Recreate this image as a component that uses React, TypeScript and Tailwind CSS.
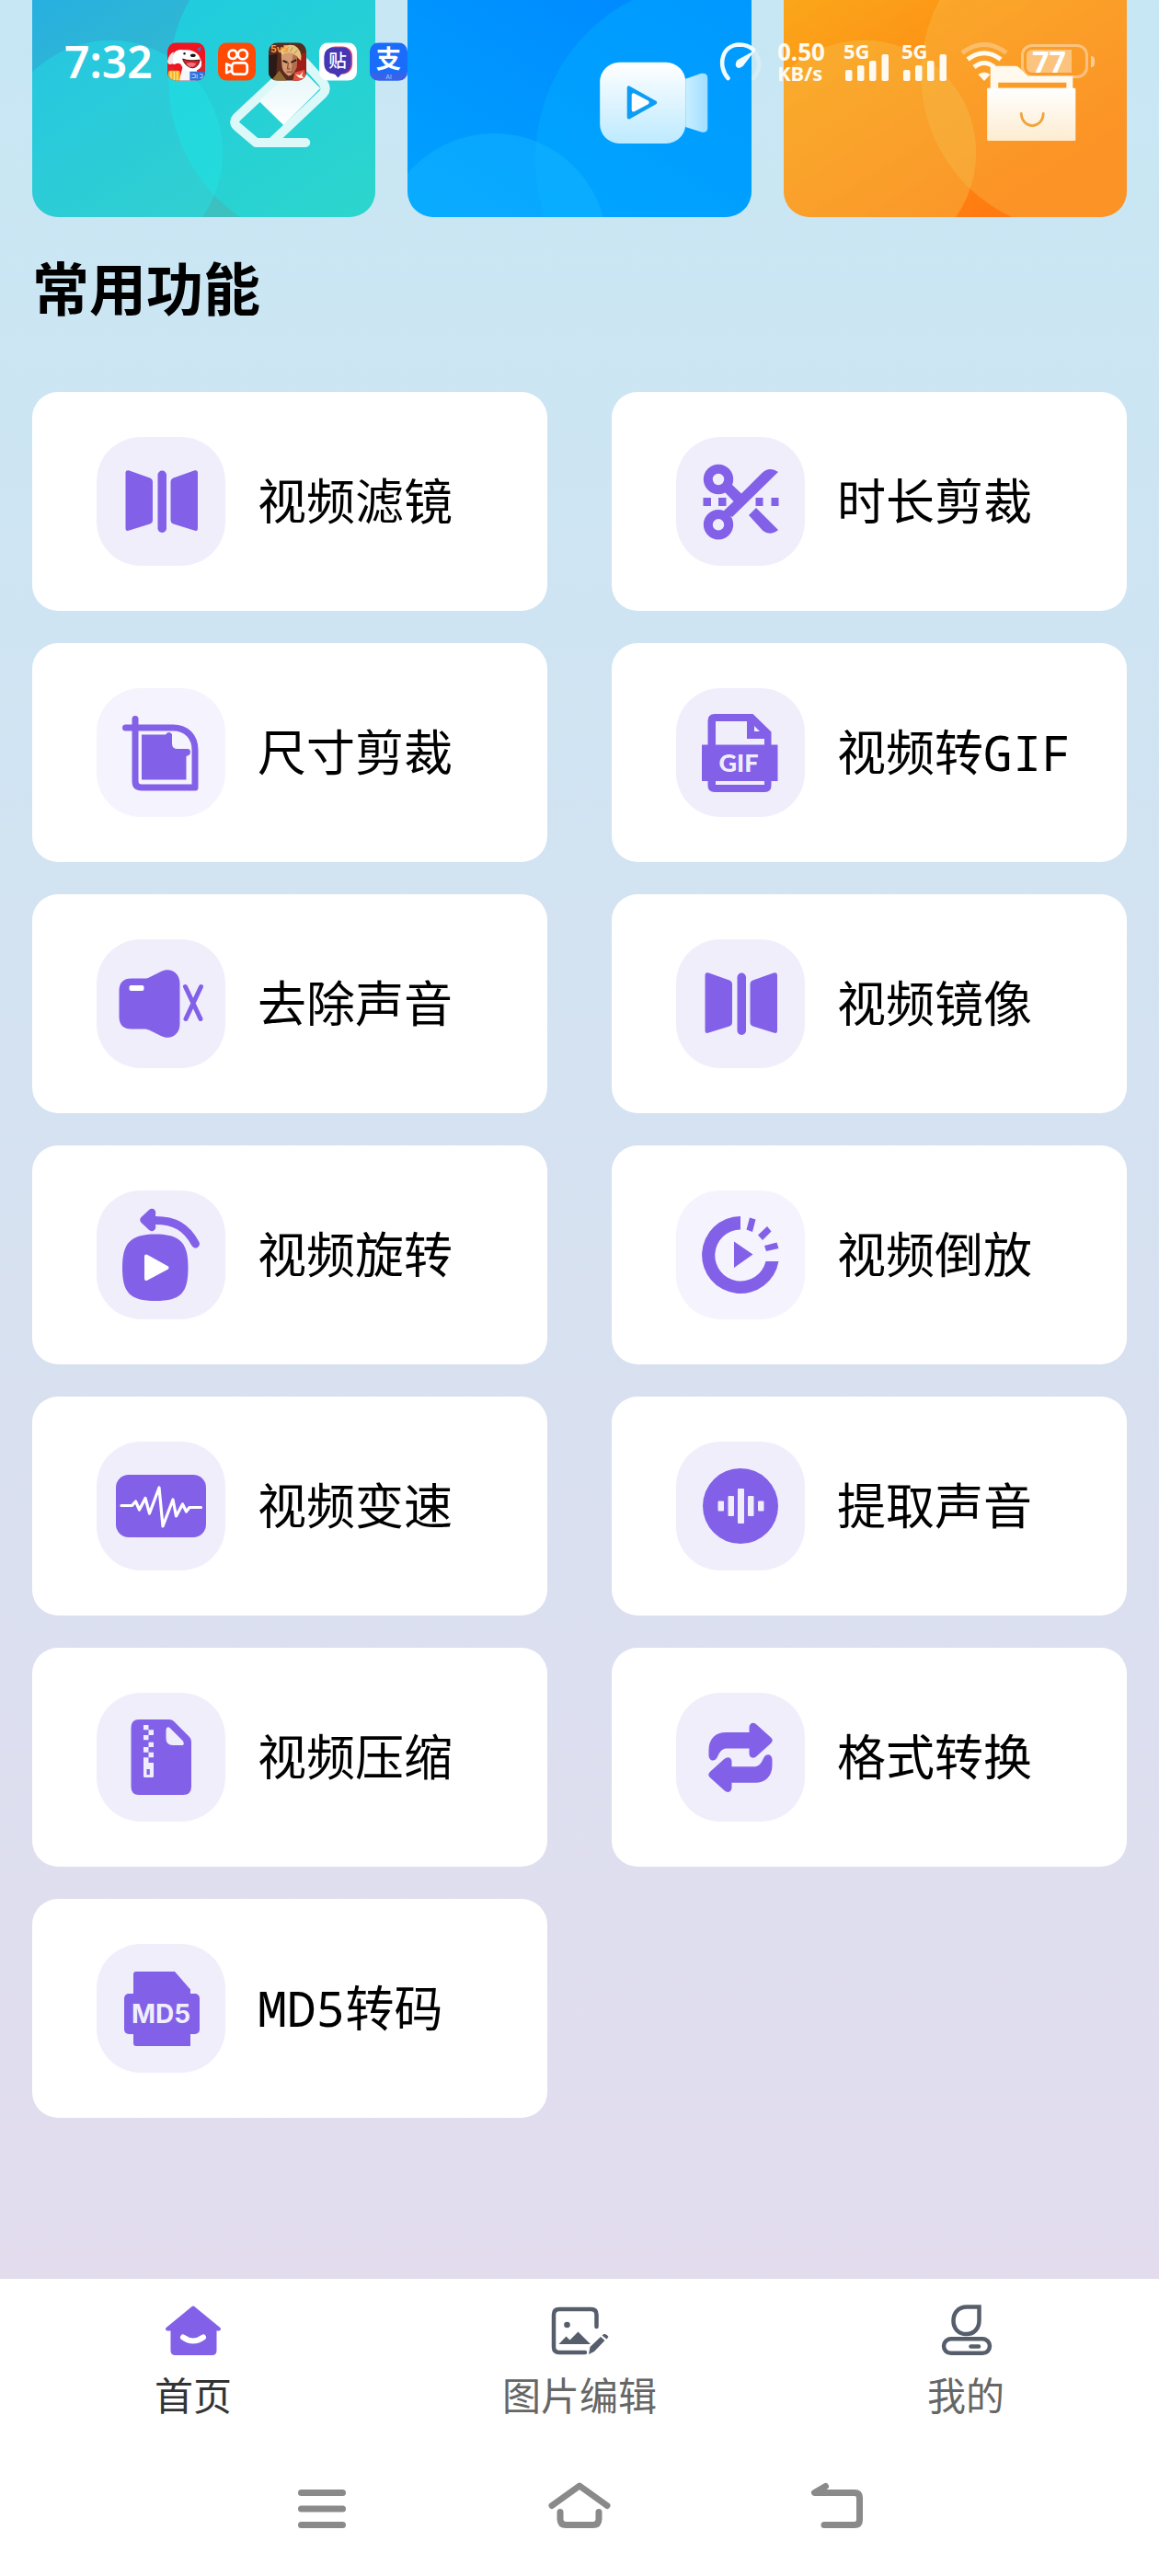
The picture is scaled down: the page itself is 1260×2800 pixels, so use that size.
import React from 'react';

const PURPLE = '#8261e8';
const TILE = '#f1eefc';

/* ---------- Feature icons, drawn on a 140 x 140 tile ---------- */

const MirrorIcon = () => (
  <g fill={PURPLE}>
    <path d="M31.5 39.5Q31.5 35.5 35.5 36.5L58 44.5Q61 45.5 61 49V90Q61 93.5 58 94.5L35.5 101.5Q31.5 103 31.5 99Z" />
    <rect x="66.5" y="36.5" width="9.5" height="67.5" rx="4.7" />
    <path d="M110 39.5Q110 35.5 106 36.5L83.5 44.5Q80.5 45.5 80.5 49V90Q80.5 93.5 83.5 94.5L106 101.5Q110 103 110 99Z" />
  </g>
);

const ScissorsIcon = () => (
  <g fill={PURPLE}>
    <circle cx="46" cy="46" r="11.2" fill="none" stroke={PURPLE} strokeWidth="10" />
    <circle cx="46" cy="95.3" r="11.2" fill="none" stroke={PURPLE} strokeWidth="10" />
    <path d="M60 51L71 61.5L93 39.5Q101.5 31.5 111 38L61 87L51 81L62.5 70L52 59Z" />
    <path d="M87 77L111 101Q102.5 108 94.5 102L79 85Z" />
    <path d="M29.5 66h8.5v9h-8.5zM46 66h8.5v9H46zM86.5 66h8v9h-8zM103.5 66h8v9h-8z" />
  </g>
);

const CropIcon = () => (
  <g>
    <path
      d="M31.5 43H83C98 43 107 53 107 67V108H49Q42 108 42 101V33.5"
      fill="none"
      stroke={PURPLE}
      strokeWidth="7"
      strokeLinecap="round"
      strokeLinejoin="round"
    />
    <path
      d="M49 50.5H75Q78.5 46 82 50V60Q82 66 88 66H99Q102 66 102 69.5Q102 73 97.5 74V99.5H49Z"
      fill={PURPLE}
    />
  </g>
);

const GifIcon = () => (
  <g>
    <path
      fill={PURPLE}
      fillRule="evenodd"
      d="M42 28H83.5L103.5 47.5V61.5H110.5V101H103.5V106Q103.5 113 96.5 113H42Q34.5 113 34.5 106V101H28V61.5H34.5V35.5Q34.5 28 42 28ZM43 36V61.5H96V55H77V36ZM85 41V47H91ZM43 101V105H96V101Z"
    />
    <text x="68" y="91" textAnchor="middle" fontSize="27" fill={TILE} className="font-['Lato','Noto_Sans',sans-serif] font-black">
      GIF
    </text>
  </g>
);

const MuteIcon = () => (
  <g>
    <path
      fill={PURPLE}
      d="M38 42.5H53Q55 42.5 58 41L70 35C80 30 90.5 36 90.5 48V92C90.5 104 80 110 70 105L58 99Q55 97.5 53 97.5H38Q24.5 97.5 24.5 84V56Q24.5 42.5 38 42.5Z"
    />
    <rect x="35.5" y="50" width="16" height="6" rx="2" fill="#fff" />
    <path d="M96.5 51.5L113 86.5M113.5 51.5L97 86.5" stroke={PURPLE} strokeWidth="5" strokeLinecap="round" />
  </g>
);

const RotateIcon = () => (
  <g>
    <path fill={PURPLE} d="M64 47.5C92 47.5 99.5 58 99.5 84C99.5 111 92 120 64 120C36 120 28 111 28 84C28 58 36 47.5 64 47.5Z" />
    <path d="M54 71.5V96L76.5 84Z" fill="#fff" stroke="#fff" strokeWidth="4" strokeLinejoin="round" />
    <path d="M62 32.5C85 32 98 40 107.5 58" fill="none" stroke={PURPLE} strokeWidth="9" strokeLinecap="round" />
    <path d="M51.5 32L60 24L59.5 31.5L60 40Z" fill={PURPLE} stroke={PURPLE} strokeWidth="8.5" strokeLinejoin="round" />
  </g>
);

const ReverseIcon = () => (
  <g fill={PURPLE}>
    <path d="M70 28A42 42 0 1 0 111.5 77H97.5A28 28 0 1 1 70 42.5Z" />
    <path d="M80 29.5L86.5 31.5L83 45L76.5 42.5ZM99 39L103.5 44.5L94 54L89 48.5ZM109.5 56.5L111.5 63L98 66L96 60ZM63 55.5V84L83.5 69.5Z" />
  </g>
);

const SpeedIcon = () => (
  <g>
    <rect x="21" y="36" width="98" height="68" rx="14" fill={PURPLE} />
    <path
      d="M27 69.5H38.5L42.5 65L46.5 74L53 61.5L57.5 78L68 50L72 92L83 63L86.5 81L93.5 68L97.5 76L101 71.5H113.5"
      fill="none"
      stroke="#fff"
      strokeWidth="3.2"
      strokeLinecap="round"
      strokeLinejoin="round"
    />
  </g>
);

const ExtractIcon = () => (
  <g>
    <circle cx="70" cy="70" r="41" fill={PURPLE} />
    <g fill={TILE}>
      <rect x="45.5" y="64.5" width="6.5" height="11" rx="1" />
      <rect x="56.5" y="59" width="6.5" height="22" rx="1" />
      <rect x="67" y="51" width="7" height="38" rx="1" />
      <rect x="78" y="59" width="6.5" height="22" rx="1" />
      <rect x="89" y="64.5" width="6.5" height="11" rx="1" />
    </g>
  </g>
);

const ZipIcon = () => (
  <g>
    <path fill={PURPLE} d="M46 29H79Q82 29 84 31L101 48Q103 50 103 53V102Q103 111 94 111H46Q37.5 111 37.5 102V38Q37.5 29 46 29Z" />
    <g fill={TILE}>
      <path d="M75.5 40Q76.5 35.5 80 38.5L94 52.5Q96 56.8 93 57H83Q75.5 57 75.5 49Z" />
      <path d="M51 35h5.5v5.3H51zM56.5 40.3H62V46h-5.5zM51 46h5.5v5.3H51zM56.5 53.7H62V59h-5.5zM51 59h5.5v5.7H51zM56.5 64.7H62v5.6h-5.5z" />
      <path fillRule="evenodd" d="M51 70.3H56.5V76H62V90.5Q62 92 60.5 92H52.5Q51 92 51 90.5ZM54.5 83V89H57.8V83Z" />
    </g>
  </g>
);

const ARROW =
  'M35.5 68V62C35.5 50 43 43 54 43H79.5V38C79.5 33 84 31 88 35L103 48.5Q106.5 51.7 103 55L88 68.5C84 72.5 79.5 70.5 79.5 66V60.5H56C50 60.5 48 63 44.5 70.5C42 75.5 35.5 74 35.5 68Z';

const ConvertIcon = () => (
  <g fill={PURPLE}>
    <path d={ARROW} />
    <path d={ARROW} transform="rotate(180 70 70.4)" />
  </g>
);

const Md5Icon = () => (
  <g>
    <path fill={PURPLE} d="M43 30H85L102 49.5V111H43Q40 111 40 108V33Q40 30 43 30Z" />
    <rect x="30" y="54" width="82" height="44" rx="5" fill={PURPLE} />
    <text x="70" y="85.5" textAnchor="middle" fontSize="28" fill={TILE} className="font-['Inter',sans-serif] font-bold">
      MD5
    </text>
  </g>
);

const features = [
  { label: '视频滤镜', icon: <MirrorIcon />, tile: 'bg-[#f1eefc]' },
  { label: '时长剪裁', icon: <ScissorsIcon />, tile: 'bg-[#f1eefc]' },
  { label: '尺寸剪裁', icon: <CropIcon />, tile: 'bg-[#f5f3fd]' },
  { label: '视频转GIF', icon: <GifIcon />, tile: 'bg-[#f1eefc]' },
  { label: '去除声音', icon: <MuteIcon />, tile: 'bg-[#f1eefc]' },
  { label: '视频镜像', icon: <MirrorIcon />, tile: 'bg-[#f1eefc]' },
  { label: '视频旋转', icon: <RotateIcon />, tile: 'bg-[#f1eefc]' },
  { label: '视频倒放', icon: <ReverseIcon />, tile: 'bg-[#f5f3fd]' },
  { label: '视频变速', icon: <SpeedIcon />, tile: 'bg-[#f1eefc]' },
  { label: '提取声音', icon: <ExtractIcon />, tile: 'bg-[#f1eefc]' },
  { label: '视频压缩', icon: <ZipIcon />, tile: 'bg-[#f1eefc]' },
  { label: '格式转换', icon: <ConvertIcon />, tile: 'bg-[#f1eefc]' },
  { label: 'MD5转码', icon: <Md5Icon />, tile: 'bg-[#f1eefc]' },
];

/* ---------- Banner artwork ---------- */

const EraserArt = () => (
  <>
    <defs>
      <linearGradient id="teal" x1="0" y1="0" x2="1" y2="1">
        <stop offset="0" stopColor="#27b0e0" />
        <stop offset="1" stopColor="#43c6b6" />
      </linearGradient>
      <linearGradient id="eraser" x1="0" y1="0" x2="0" y2="1">
        <stop offset="0" stopColor="#e2f6f9" />
        <stop offset="1" stopColor="#ffffff" />
      </linearGradient>
    </defs>
    <rect width="374" height="236" fill="url(#teal)" />
    <circle cx="328" cy="88" r="180" fill="#12e8e6" fillOpacity="0.45" />
    <circle cx="85" cy="166" r="122" fill="#22e4e8" fillOpacity="0.42" />
    <path
      d="M297 155H243L223 138Q217.5 133 222 128L285 69Q291 63 297 69L315 89Q321 96 316 102L262 153"
      fill="none"
      stroke="#dcf8f9"
      strokeWidth="10"
      strokeLinecap="round"
      strokeLinejoin="round"
    />
    <path d="M246.5 110L288 71L313 96L273 136Z" fill="url(#eraser)" />
  </>
);

const VideoArt = () => (
  <>
    <defs>
      <linearGradient id="blue" x1="1" y1="0" x2="0" y2="1">
        <stop offset="0" stopColor="#0086ff" />
        <stop offset="1" stopColor="#00a2ff" />
      </linearGradient>
      <linearGradient id="camera" x1="0" y1="0" x2="0" y2="1">
        <stop offset="0" stopColor="#ffffff" />
        <stop offset="1" stopColor="#bdeaff" />
      </linearGradient>
      <linearGradient id="lens" x1="0" y1="0" x2="1" y2="0">
        <stop offset="0" stopColor="#c8eeff" />
        <stop offset="1" stopColor="#a0deff" />
      </linearGradient>
    </defs>
    <rect width="374" height="236" fill="url(#blue)" />
    <circle cx="332" cy="172" r="193" fill="#00b0ff" fillOpacity="0.45" />
    <circle cx="94" cy="268" r="123" fill="#14b8ff" fillOpacity="0.45" />
    <path d="M302 86L319 80Q326 79 326 85V139Q326 145 319 143.5L302 138Z" fill="url(#lens)" />
    <rect x="209" y="68" width="93" height="88" rx="21" fill="url(#camera)" />
    <path d="M240.5 95.5V127.5L269 111.5Z" fill="#0d9df5" stroke="#0d9df5" strokeWidth="4" strokeLinejoin="round" />
    <path d="M245.5 103.5V119.5L260.5 111.5Z" fill="#fff" stroke="#fff" strokeWidth="4" strokeLinejoin="round" />
  </>
);

const FolderArt = () => (
  <>
    <defs>
      <linearGradient id="orange" x1="0" y1="0" x2="1" y2="1">
        <stop offset="0" stopColor="#fba61a" />
        <stop offset="0.8" stopColor="#ff7a10" />
      </linearGradient>
      <linearGradient id="folder" x1="0" y1="0" x2="0" y2="1">
        <stop offset="0" stopColor="#ffffff" />
        <stop offset="1" stopColor="#fdecd0" />
      </linearGradient>
    </defs>
    <rect width="374" height="236" fill="url(#orange)" />
    <circle cx="320" cy="81" r="171" fill="#f6c04e" fillOpacity="0.36" />
    <circle cx="87" cy="166" r="122" fill="#f6c04e" fillOpacity="0.4" />
    <path fillRule="evenodd" d="M227 72H252Q254 72 256 74L265 83H314V97H224.5V75Q224.5 72 227 72ZM233 90V96H307V90Z" fill="#fff9ee" />
    <rect x="221" y="96" width="96" height="57" rx="1" fill="url(#folder)" />
    <path d="M258 123.5C259 141 281 141 282 123.5" fill="none" stroke="#f2a33c" strokeWidth="2.8" strokeLinecap="round" />
  </>
);

const banners = [
  { name: 'eraser', art: <EraserArt /> },
  { name: 'video', art: <VideoArt /> },
  { name: 'folder', art: <FolderArt /> },
];

/* ---------- Status bar ---------- */

const appIcons = [
  // white puppy on red
  <g key="dog">
    <rect width="42" height="42" fill="#ee1420" />
    <path d="M0 26L8 28L6 42H0ZM42 22L35 28L36 42H42Z" fill="#d9242f" />
    <path d="M17 27L33 30L32 42H13Z" fill="#f4f6fa" />
    <path d="M6 14Q9 6 18 8Q29 7 35 14L38 21Q39 29 32 31Q20 34 16 26Q14 21 8 24Q3 24 4 18Z" fill="#fff" />
    <path d="M7 10Q1 13 0 21Q1 26 6 23Z" fill="#f3e6e8" />
    <path d="M17 18Q25 21 36 19Q35 27 28 28Q20 27 17 18Z" fill="#d51f28" stroke="#4a1216" strokeWidth="1" />
    <path d="M21 23Q26 21 32 23Q30 27 27 27Q23 27 21 23Z" fill="#f2707a" />
    <ellipse cx="28.5" cy="14" rx="3" ry="1.8" fill="#161616" />
    <circle cx="19" cy="12" r="1.2" fill="#161616" />
    <path d="M33 7L38 4L36 10Z" fill="#3b78d8" />
    <rect x="1" y="31" width="13" height="11" rx="2" fill="#f6b51e" />
    <path d="M4 32V42M7.5 32V42M11 32V42" stroke="#fff0b0" strokeWidth="1" />
    <rect x="25" y="32" width="17" height="10" fill="#2b72dc" />
    <path d="M27 35H31V39H27M33 35V40M36 35H39V39H36" stroke="#bcd6fb" strokeWidth="1" fill="none" />
  </g>,
  // camera with two reels
  <g key="camera">
    <rect width="42" height="42" fill="#ff4a06" />
    <g fill="none" stroke="#fff" strokeWidth="2.8">
      <circle cx="16.5" cy="13" r="4.7" />
      <circle cx="27.5" cy="13" r="5.2" />
      <rect x="15.5" y="22.5" width="17" height="12.5" rx="3.5" />
      <path d="M15.5 26L9.5 23.5V33.5L15.5 31" strokeLinejoin="round" />
    </g>
  </g>,
  // game hero portrait
  <g key="hero">
    <rect width="42" height="42" fill="#5a2a1c" />
    <path d="M0 14L10 12L8 42H0Z" fill="#2b1a18" />
    <path d="M33 14L42 10V42H28Z" fill="#a01c18" />
    <path d="M13 9Q18 0 29 3Q38 8 36 20L31 15Q22 8 15 15Z" fill="#e6c67e" />
    <path d="M14 14Q22 8 32 15L31 28Q27 37 22 37Q16 33 15 27Z" fill="#d69a72" />
    <path d="M27 13L32 15L31 28Q28 34 25 36Z" fill="#b06f4e" />
    <path d="M18 10L22 5M24 10L27 5M29 12L32 8" stroke="#b78a48" strokeWidth="1" />
    <path d="M16 20L21 22M25 22L31 19" stroke="#3b1d14" strokeWidth="2" />
    <path d="M22 22L21 29H24M20 32.5H26" stroke="#8a4c34" strokeWidth="1.3" fill="none" />
    <path d="M3 42L12 31L20 42Z" fill="#8f6a30" />
    <path d="M29 33L40 30L42 42H27Z" fill="#e2533a" />
    <path d="M30 35L35 36L38 32L37 37L40 40L34 39Z" fill="#fff" />
    <text x="2" y="11" fontSize="11" fill="#ff9c3a" className="font-['Inter',sans-serif] font-bold">5v5</text>
  </g>,
  // chat bubble
  <g key="bubble">
    <rect width="42" height="42" fill="#fff" />
    <rect x="7" y="4" width="30" height="31" rx="11" fill="#e8476e" />
    <path d="M5.5 15Q6 5 17 5H26Q35 5 35.5 15V23Q35 34 25 34.5L21 39L17 34.5Q6 34 5.5 24Z" fill="#4536b4" />
    <text x="20.5" y="27" fontSize="20" textAnchor="middle" fill="#fff" className="font-['Noto_Sans_CJK_SC',sans-serif] font-medium">贴</text>
  </g>,
  // payment app
  <g key="pay">
    <rect width="42" height="42" fill="#1a6dfa" />
    <rect y="34" width="42" height="8" fill="#3a62e8" />
    <text x="21" y="28" fontSize="28" textAnchor="middle" fill="#fff" className="font-['Noto_Sans_CJK_SC',sans-serif] font-bold">支</text>
    <text x="21" y="40" fontSize="7" textAnchor="middle" fill="#b8ccff" className="font-['Inter',sans-serif]">AI</text>
  </g>,
];

const Signal = () => (
  <div className="flex w-[48px] flex-col">
    <span className="h-[13px] text-[22px] leading-[18px] font-bold">5G</span>
    <svg viewBox="0 0 48 29" className="ml-[2px] h-[29px] w-[48px]" fill="#fffaf0">
      <rect x="0" y="17" width="7.5" height="12" rx="2" />
      <rect x="13" y="12" width="7.5" height="17" rx="2" />
      <rect x="26" y="7" width="7.5" height="22" rx="2" />
      <rect x="39.5" y="0" width="7.5" height="29" rx="2" />
    </svg>
  </div>
);

const StatusBar = () => (
  <div className="absolute inset-x-0 top-0 flex items-start justify-between pt-[46px] pr-[70px] pl-[70px] font-['Noto_Sans',sans-serif] text-white">
    <div className="flex items-center">
      <span className="w-[112px] text-[48px] leading-[42px] font-semibold">7:32</span>
      <div className="flex gap-[14px]">
        {appIcons.map((icon, i) => (
          <svg key={i} viewBox="0 0 42 42" className="h-[42px] w-[41px] rounded-[10px]">
            {icon}
          </svg>
        ))}
      </div>
    </div>

    <div className="flex items-start">
      <svg viewBox="0 0 48 42" className="mr-[16px] h-[42px] w-[48px]" fill="none" strokeLinecap="round">
        <path d="M39 9.5Q50 25 38 39" stroke="#fff" strokeOpacity="0.25" strokeWidth="4.5" />
        <path d="M10.5 39C-1 26 3 3 23 2.5Q32 2.5 38 8" stroke="#f2fbff" strokeWidth="4.5" />
        <path d="M40 8.5L27 25.5Q22 30 19 26Q18 22 21 19Z" fill="#f2fbff" />
      </svg>
      <div className="flex w-[72px] flex-col text-[#fffaf0]">
        <span className="text-[26px] leading-[20px] font-bold">0.50</span>
        <span className="text-[22px] leading-[26px] font-bold">KB/s</span>
      </div>
      <div className="flex gap-[15px] text-[#fffaf0]">
        <Signal />
        <Signal />
      </div>
      <svg viewBox="0 0 52 42" className="ml-[16px] h-[42px] w-[52px]" fill="none">
        <path d="M2 11.5Q26 -6.5 50 11.5" stroke="#fff" strokeOpacity="0.3" strokeWidth="5" />
        <path d="M8 18.5Q26 5 44 18.5" stroke="#fffaf0" strokeWidth="5" />
        <path d="M15 27Q26 18 37 27" stroke="#fffaf0" strokeWidth="5" />
        <path d="M19.5 35Q26 30 32.5 35L26 42Z" fill="#fffaf0" />
      </svg>
      <div className="mt-[2px] ml-[14px] flex items-center gap-[3px]">
        <div className="flex h-[37px] w-[73px] items-center rounded-[12px] border-[3px] border-white/40 p-[3px]">
          <div className="flex h-full w-[49px] items-center justify-center rounded-l-[6px] bg-white/40">
            <span className="text-[32px] leading-[26px] font-bold">77</span>
          </div>
        </div>
        <div className="h-[12px] w-[4px] rounded-r-full bg-white/50" />
      </div>
    </div>
  </div>
);

/* ---------- Bottom bars ---------- */

const HomeTabIcon = () => (
  <>
    <path d="M35 10.5L63 33.5H7Z" fill={PURPLE} stroke={PURPLE} strokeWidth="4" strokeLinejoin="round" />
    <path d="M10.5 32H60.5V57Q60.5 62 55.5 62H15.5Q10.5 62 10.5 57Z" fill={PURPLE} />
    <path d="M24 42.5Q35 50.5 46 42.5" fill="none" stroke="#fff" strokeWidth="6" strokeLinecap="round" />
  </>
);

const EditTabIcon = () => (
  <g fill="#565d6b">
    <path
      d="M53.5 31V18Q53.5 12 47.5 12H13Q7 12 7 18V53Q7 59 13 59H41"
      fill="none"
      stroke="#565d6b"
      strokeWidth="4.5"
      strokeLinecap="round"
    />
    <circle cx="21.5" cy="29" r="3.3" />
    <path d="M12.5 50L20.5 41.5L24.5 45.5L33.5 36.5L47 50Z" />
    <path d="M45 61L46.5 53L58 42L62.5 46L51 58ZM59.5 40.5L61.5 39Q64.5 38.5 66.5 42L64.5 44.5Z" />
  </g>
);

const MineTabIcon = () => (
  <g fill="none" stroke="#565d6b" strokeWidth="4.5">
    <path d="M49.5 9.5H36C27 9.5 21.5 16 21.5 24.5C21.5 33 27 39 35.5 39C44 39 49.5 33 49.5 24Z" />
    <rect x="11" y="44.3" width="50" height="15.5" rx="7.7" />
    <path d="M40.5 52.5H49" strokeLinecap="round" />
  </g>
);

const tabs = [
  { label: '首页', icon: <HomeTabIcon />, active: true },
  { label: '图片编辑', icon: <EditTabIcon />, active: false },
  { label: '我的', icon: <MineTabIcon />, active: false },
];

const systemKeys = [
  { label: '菜单', d: 'M12.5 19.5H57.5M12.5 37H57.5M12.5 54.5H57.5' },
  { label: '主屏幕', d: 'M5 33.5L35 12L65 33.5M14 40.5V48Q14 54.5 20.5 54.5H49.5Q56 54.5 56 48V40.5' },
  { label: '返回', d: 'M22.5 12.5L10.5 19.5H54Q59.5 19.5 59.5 25V49Q59.5 54.5 54 54.5H21' },
];

const BottomBar = () => (
  <footer className="bg-white">
    <nav className="grid grid-cols-3 pt-[21px]">
      {tabs.map((tab) => (
        <a key={tab.label} href="#" className="flex flex-col items-center gap-[10px]">
          <svg viewBox="0 0 70 70" className="h-[70px] w-[70px]">
            {tab.icon}
          </svg>
          <span className={tab.active ? 'text-[42px] leading-[48px] text-[#333333]' : 'text-[42px] leading-[48px] text-[#666666]'}>
            {tab.label}
          </span>
        </a>
      ))}
    </nav>
    <div className="flex justify-center gap-[210px] pt-[64px] pb-[40px]">
      {systemKeys.map((key) => (
        <button key={key.label} type="button" aria-label={key.label}>
          <svg
            viewBox="0 0 70 70"
            className="block h-[70px] w-[70px]"
            fill="none"
            stroke="#8a8a8a"
            strokeWidth="7"
            strokeLinecap="round"
            strokeLinejoin="round"
          >
            <path d={key.d} />
          </svg>
        </button>
      ))}
    </div>
  </footer>
);

const App: React.FC = () => {
  return (
    <div className="relative flex min-h-screen flex-col bg-linear-to-b from-[#c7e7f4] to-[#e6dbed] font-['Noto_Sans_CJK_SC',sans-serif]">
      <main className="flex-1 px-[35px]">
        <div className="grid grid-cols-3 gap-[35px]">
          {banners.map((banner) => (
            <a key={banner.name} href="#" aria-label={banner.name} className="overflow-hidden rounded-b-[28px]">
              <svg viewBox="0 0 373 236" preserveAspectRatio="xMidYMax slice" className="block h-[236px] w-full">
                {banner.art}
              </svg>
            </a>
          ))}
        </div>

        <h1 className="mt-[36px] text-[62px] leading-[78px] font-bold text-black">常用功能</h1>

        <div className="mt-[76px] grid grid-cols-2 gap-x-[70px] gap-y-[35px]">
          {features.map((feature) => (
            <button key={feature.label} type="button" className="flex items-center gap-[35px] rounded-[28px] bg-white py-[49px] pl-[70px]">
              <svg viewBox="0 0 140 140" className={`h-[140px] w-[140px] shrink-0 rounded-[48px] ${feature.tile}`}>
                {feature.icon}
              </svg>
              <span className="font-['Noto_Sans_Mono','DejaVu_Sans_Mono','Noto_Sans_CJK_SC',monospace] text-[53px] leading-[70px] whitespace-nowrap text-black">
                {feature.label}
              </span>
            </button>
          ))}
        </div>
      </main>
      <BottomBar />
      <StatusBar />
    </div>
  );
};

export default App;
